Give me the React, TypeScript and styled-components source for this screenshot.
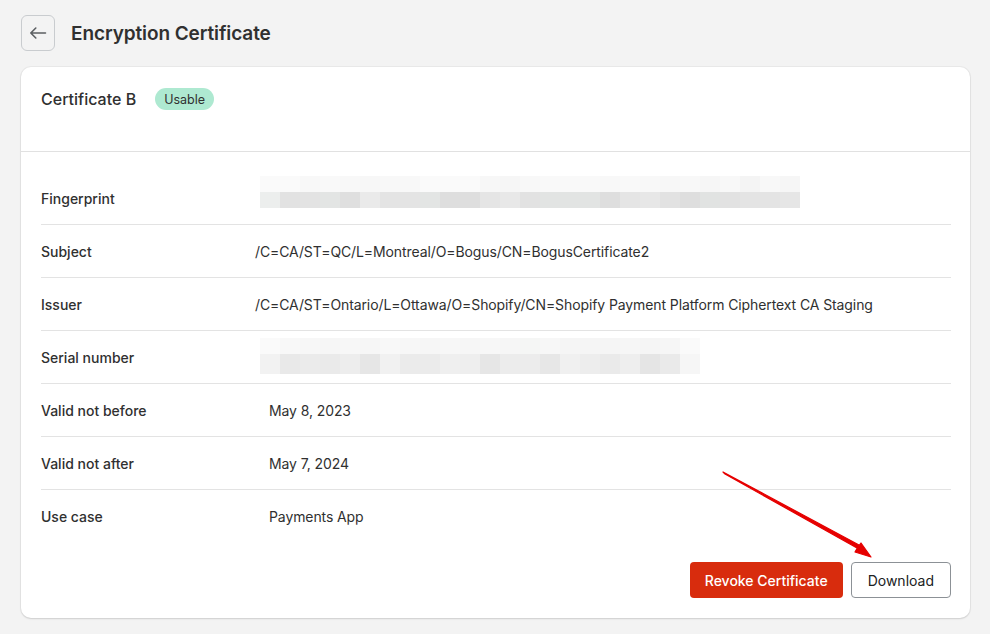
import React from "react";
import styled, { createGlobalStyle } from "styled-components";

const Global = createGlobalStyle`
  html, body { margin: 0; padding: 0; background: #f3f3f3; }
  body { font-family: Inter, "Noto Sans", sans-serif; color: #303030; -webkit-font-smoothing: antialiased; }
  * { box-sizing: border-box; }
`;

const Page = styled.div`
  position: relative;
  width: 990px;
  min-height: 634px;
  padding: 15px 20px 16px 21px;
`;

const TopBar = styled.div`
  display: flex;
  align-items: center;
  gap: 16px;
  height: 36px;
  margin-bottom: 16px;
`;

const BackButton = styled.button`
  width: 34px;
  height: 36px;
  border: 1px solid #c9cccf;
  border-radius: 6px;
  background: transparent;
  display: flex;
  align-items: center;
  justify-content: center;
  padding: 0;
  color: #5c5f62;
`;

const Title = styled.h1`
  margin: 0;
  font-size: 19px;
  font-weight: 600;
  color: #303030;
  letter-spacing: -0.1px;
`;

const Card = styled.section`
  background: #fff;
  border-radius: 10px;
  box-shadow: 0 0 0 1px rgba(0,0,0,0.04), 0 1px 2px rgba(0,0,0,0.12);
  overflow: hidden;
`;

const CardHeader = styled.div`
  height: 85px;
  padding: 21px 20px 0;
  display: flex;
  align-items: flex-start;
  gap: 19px;
  border-bottom: 1px solid #e1e1e1;
`;

const CardTitle = styled.h2`
  margin: 0;
  font-size: 16px;
  line-height: 22px;
  font-weight: 500;
  color: #303030;
`;

const Badge = styled.span`
  display: inline-flex;
  align-items: center;
  height: 22px;
  padding: 0 9px;
  border-radius: 11px;
  background: #aee9d1;
  color: #303030;
  font-size: 12.5px;
`;

const Body = styled.div`
  padding: 20px 19px 20px 20px;
`;

const Rows = styled.div`
  display: flex;
  flex-direction: column;
`;

const Row = styled.div`
  display: grid;
  grid-template-columns: 214px 1fr;
  align-items: center;
  height: 53px;
  border-bottom: 1px solid #e3e3e3;
  &:last-child { border-bottom: none; height: 52px; }
`;

const Label = styled.div`
  font-size: 14px;
  font-weight: 500;
  color: #303030;
`;

const Value = styled.div<{ $indent?: number }>`
  font-size: 14px;
  color: #303030;
  letter-spacing: -0.1px;
  padding-left: ${(p) => p.$indent ?? 0}px;
`;

const Mosaic = styled.div<{ $cols: number; $shift: number }>`
  display: grid;
  grid-template-columns: repeat(${(p) => p.$cols}, 20px);
  margin-left: 5px;
  transform: translateY(${(p) => p.$shift}px);
`;

const Cell = styled.div<{ $h: number }>`
  height: ${(p) => p.$h}px;
`;

const Footer = styled.div`
  display: flex;
  justify-content: flex-end;
  gap: 8px;
  padding-top: 20px;
`;

const Button = styled.button<{ $variant: "danger" | "plain" }>`
  height: 36px;
  padding: 0 ${(p) => (p.$variant === "danger" ? 15 : 16)}px;
  border-radius: 4px;
  font-family: inherit;
  font-size: 14px;
  font-weight: ${(p) => (p.$variant === "danger" ? 500 : 400)};
  background: ${(p) => (p.$variant === "danger" ? "#d82c0d" : "#fff")};
  color: ${(p) => (p.$variant === "danger" ? "#fff" : "#202223")};
  border: ${(p) => (p.$variant === "danger" ? "none" : "1px solid #8c9196")};
`;

const Annotation = styled.svg`
  position: absolute;
  left: 0;
  top: 0;
  pointer-events: none;
`;

const fpTop = [
  "#fafafa","#fafafa","#f8f8f8","#f9f9f9","#f8f8f8","#f7f7f7","#f8f8f8","#f8f8f8","#fafafa","#fafafa","#fafafa","#f7f7f7","#f6f6f6","#f8f8f8","#f9f9f9","#f9f9f9","#f9f9f9","#f8f8f8","#f9f9f9","#f8f8f8","#f7f7f7","#f8f8f8","#f6f6f6","#f8f8f8","#f4f4f4","#f8f8f8","#f6f6f6",
];
const fpBot = [
  "#eceeed","#e2e2e2","#e3e3e3","#e3e5e4","#dfdfdf","#eaeaea","#e4e4e4","#e4e4e4","#e3e5e4","#dedede","#dedede","#e5e5e5","#e8e8e8","#e2e2e2","#e2e4e3","#e2e4e3","#e2e4e3","#dedede","#e5e5e5","#e7e7e7","#e2e2e2","#dedede","#e1e3e2","#e2e2e2","#e4e4e4","#e4e4e4","#e6e6e6",
];
const snTop = [
  "#fafafa","#f8f8f8","#f7f7f7","#f6f6f6","#f7f7f7","#f6f6f6","#f8f8f8","#f7f7f7","#f6f6f6","#f7f7f7","#f6f6f6","#f7f7f7","#f6f6f6","#f5f6f5","#f7f7f7","#f5f5f5","#f5f5f5","#f5f5f5","#f6f6f6","#f5f5f5","#f6f6f6","#fafafa",
];
const snBot = [
  "#f2f2f2","#e9e9e9","#ebebeb","#eaeaea","#ededed","#e6e6e6","#f1f1f1","#ebebeb","#ebebeb","#efefef","#eeeeee","#e6e6e6","#ececec","#ececec","#e7e7e7","#f0f0f0","#ededed","#eaeaea","#eeeeee","#e5e5e5","#eaeaea","#f6f6f6",
];

function Pixels({ top, bottom, topH, bottomH, shift }: { top: string[]; bottom: string[]; topH: number; bottomH: number; shift: number }) {
  return (
    <Mosaic $cols={top.length} $shift={shift}>
      {top.map((c, i) => (
        <Cell key={"t" + i} $h={topH} style={{ background: c }} />
      ))}
      {bottom.map((c, i) => (
        <Cell key={"b" + i} $h={bottomH} style={{ background: c }} />
      ))}
    </Mosaic>
  );
}

export default function App() {
  return (
    <>
      <Global />
      <Page>
        <TopBar>
          <BackButton aria-label="Back">
            <svg width="18" height="18" viewBox="0 0 18 18" fill="none">
              <path d="M16.5 9H1.8M6.8 4L1.8 9l5 5" stroke="currentColor" strokeWidth="1.6" strokeLinecap="round" strokeLinejoin="round" />
            </svg>
          </BackButton>
          <Title>Encryption Certificate</Title>
        </TopBar>
        <Card>
          <CardHeader>
            <CardTitle>Certificate B</CardTitle>
            <Badge>Usable</Badge>
          </CardHeader>
          <Body>
            <Rows>
              <Row>
                <Label>Fingerprint</Label>
                <Pixels top={fpTop} bottom={fpBot} topH={16} bottomH={16} shift={-6} />
              </Row>
              <Row>
                <Label>Subject</Label>
                <Value>/C=CA/ST=QC/L=Montreal/O=Bogus/CN=BogusCertificate2</Value>
              </Row>
              <Row>
                <Label>Issuer</Label>
                <Value>/C=CA/ST=Ontario/L=Ottawa/O=Shopify/CN=Shopify Payment Platform Ciphertext CA Staging</Value>
              </Row>
              <Row>
                <Label>Serial number</Label>
                <Pixels top={snTop} bottom={snBot} topH={16} bottomH={20} shift={-1} />
              </Row>
              <Row>
                <Label>Valid not before</Label>
                <Value $indent={14}>May 8, 2023</Value>
              </Row>
              <Row>
                <Label>Valid not after</Label>
                <Value $indent={14}>May 7, 2024</Value>
              </Row>
              <Row>
                <Label>Use case</Label>
                <Value $indent={14}>Payments App</Value>
              </Row>
            </Rows>
            <Footer>
              <Button $variant="danger">Revoke Certificate</Button>
              <Button $variant="plain">Download</Button>
            </Footer>
          </Body>
        </Card>
        <Annotation width="990" height="634" viewBox="0 0 990 634">
          <path d="M723 472 L859 545 L855 552 L871 557 L861 543 L857 548 L725 474 Z" fill="#e60000" stroke="#e60000" strokeWidth="1.2" strokeLinejoin="round" />
        </Annotation>
      </Page>
    </>
  );
}
